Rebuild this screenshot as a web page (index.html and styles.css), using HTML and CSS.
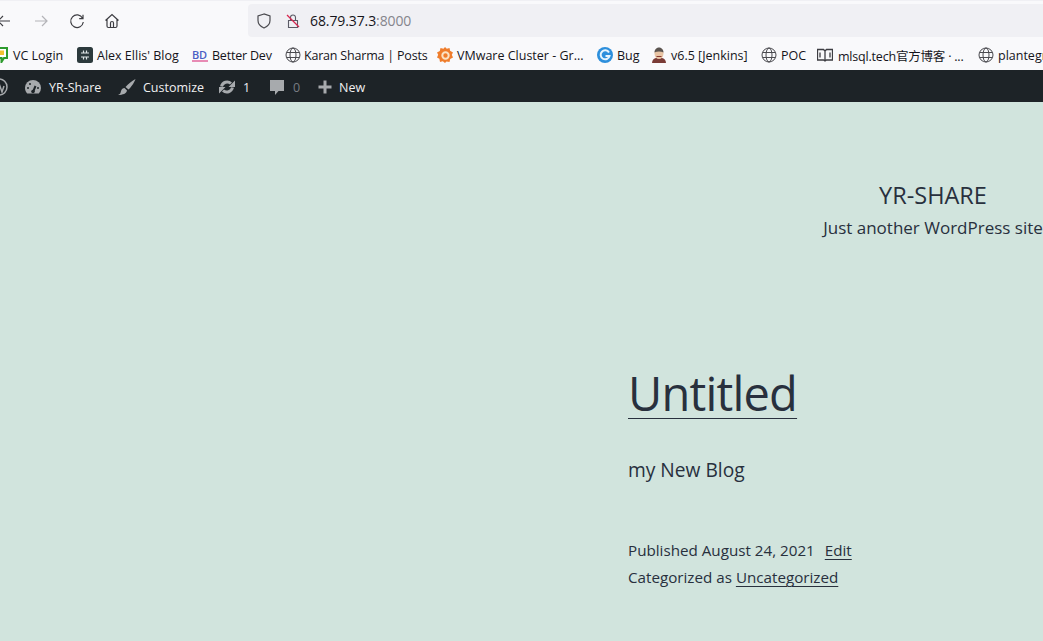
FILE: index.html
```html
<!DOCTYPE html>
<html lang="en">
<head>
	<meta charset="UTF-8">
	<title>YR-Share</title>
	<link rel="stylesheet" href="styles.css">
</head>
<body>
	<div class="toolbar">
		<div class="nav">
			<svg class="nav-icon back" viewBox="0 0 16 16"><path d="M14 8H2M7 3 2 8l5 5"/></svg>
			<svg class="nav-icon forward" viewBox="0 0 16 16"><path d="M2 8h12M9 3l5 5-5 5"/></svg>
			<svg class="nav-icon reload" viewBox="0 0 16 16"><path d="M13.6 5.2A6.3 6.3 0 1 0 14.3 9M14 1.8v3.8h-3.8"/></svg>
			<svg class="nav-icon home" viewBox="0 0 16 16"><path d="M1.500 7.500 8 1.500l6.500 6M3 6.500V13a1.500 1.500 0 0 0 1.500 1.500h7A1.500 1.500 0 0 0 13 13V6.500M6.500 14.500V10a1.500 1.500 0 0 1 3 0v4.500"/></svg>
		</div>
		<div class="urlbar">
			<svg class="shield" viewBox="0 0 16 16"><path d="M8 1 2 3v4.500c0 3.500 2.500 6 6 7.500 3.500-1.500 6-4 6-7.500V3z"/></svg>
			<svg class="lock" viewBox="0 0 16 16"><path class="lock-body" d="M3.500 7.500h9v7h-9zM5.500 7.500V4.500a2.500 2.500 0 0 1 5 0v3"/><path class="lock-slash" d="M2 2l12 12"/></svg>
			<span class="host">68.79.37.3</span><span class="port">:8000</span>
		</div>
	</div>

	<div class="bookmarks">
		<a class="mark mark-vc"><svg class="fav" viewBox="0 0 9 16"><path d="M-8 1H7v10H4l-2.500 4v-4H-8z" fill="#fff" stroke="#2e9b2e" stroke-width="2"/><rect y="3.500" width="4" height="4.500" fill="#f2c230"/></svg>VC Login</a>
		<a class="mark mark-alex"><svg class="fav" viewBox="0 0 16 16"><rect width="16" height="16" rx="2.500" fill="#2c3a3c"/><path d="M4 6h8M4 10h8M6.500 3.500v2M9.500 3.500v2M6.500 10.500v2M9.500 10.500v2" stroke="#dfe6e6" stroke-width="1.200"/></svg>Alex Ellis' Blog</a>
		<a class="mark mark-bd"><span class="bd">BD</span>Better Dev</a>
		<a class="mark mark-karan"><svg class="fav globe" viewBox="0 0 16 16"><circle cx="8" cy="8" r="7"/><ellipse cx="8" cy="8" rx="3" ry="7"/><path d="M1.500 5.500h13M1.500 10.500h13"/></svg>Karan Sharma | Posts</a>
		<a class="mark mark-grafana"><svg class="fav" viewBox="0 0 16 16"><path d="M8 0l1.800 1.800L12.500 1l.6 2.700L16 5.500l-1.200 2.300L16 10.500l-2.800 1.400L12.500 15l-3-.6L8 16l-2.200-1.700L3 15l-.6-3.200L0 10.500l1.200-2.700L0 5.500l2.800-1.500L3.500 1l3 .8z" fill="#ef7d2c"/><circle cx="8.500" cy="8.500" r="3.200" fill="none" stroke="#fbe3c4" stroke-width="2"/></svg>VMware Cluster - Gr...</a>
		<a class="mark mark-bug"><svg class="fav" viewBox="0 0 16 16"><circle cx="8" cy="8" r="8" fill="#2d8fdc"/><path d="M12 5.500A4.500 4.500 0 1 0 12.500 9H8.500" fill="none" stroke="#e8f5fd" stroke-width="2"/></svg>Bug</a>
		<a class="mark mark-jenkins"><svg class="fav" viewBox="0 0 16 16"><path d="M1 16c0-3 2-4.500 4-5h6c2 .5 4 2 4 5z" fill="#7a3b36"/><ellipse cx="8" cy="6.500" rx="4.500" ry="5.500" fill="#e8c4a4"/><path d="M3.500 5.500C3.500 2 6 .5 8 .5s4.500 1.500 4.500 5C10 4 6 4 3.500 5.500z" fill="#5b5450"/><path d="M5.500 9.500h5" stroke="#8a3b32"/></svg>v6.5 [Jenkins]</a>
		<a class="mark mark-poc"><svg class="fav globe" viewBox="0 0 16 16"><circle cx="8" cy="8" r="7"/><ellipse cx="8" cy="8" rx="3" ry="7"/><path d="M1.500 5.500h13M1.500 10.500h13"/></svg>POC</a>
		<a class="mark mark-mlsql"><svg class="fav book" viewBox="0 0 16 16"><path d="M.5 2.500h6L8 4l1.500-1.500h6v10.500h-6L8 14l-1.500-1H.5zM8 4v10M3 5.500v5M13 5.500v5"/></svg>mlsql.tech官方博客 · ...</a>
		<a class="mark mark-plant"><svg class="fav globe" viewBox="0 0 16 16"><circle cx="8" cy="8" r="7"/><ellipse cx="8" cy="8" rx="3" ry="7"/><path d="M1.500 5.500h13M1.500 10.500h13"/></svg>plantegr</a>
	</div>

	<div class="adminbar">
		<svg class="wp-logo" viewBox="0 0 18 18"><circle cx="9" cy="9" r="8" fill="none" stroke="#a7aaad" stroke-width="1.500"/><path d="M5 5.500 8 14l1.500-4L8 5.500M9 5.500 12 14l2-6" fill="none" stroke="#a7aaad" stroke-width="1.500"/></svg>
		<a class="bar-item item-site"><svg class="bar-icon" viewBox="0 0 18 18"><path d="M9 2a8 8 0 0 0-8 8c0 2.200.8 4 2.200 5.500h11.600A8 8 0 0 0 17 10a8 8 0 0 0-8-8z"/><path d="M9 14l2.500-6" stroke="#1d2327" stroke-width="2"/><circle cx="9" cy="13.500" r="1.800" fill="#1d2327"/><circle cx="4" cy="10" r="1" fill="#1d2327"/><circle cx="6" cy="6" r="1" fill="#1d2327"/><circle cx="14" cy="10" r="1" fill="#1d2327"/></svg>YR-Share</a>
		<a class="bar-item item-custom"><svg class="bar-icon" viewBox="0 0 18 18"><path d="M17.500 1c-1 3-4 8-7 10.500L7.500 9C10 6 14.500 2.500 17.500 1zM6.500 10l2.500 2.500c-.5 3-4 4.500-9 4.500 2.500-1 2.500-2 3-4 .5-2 2-3 3.500-3z"/></svg>Customize</a>
		<a class="bar-item item-updates"><svg class="bar-icon" viewBox="0 0 18 18"><path d="M3.500 8.500A5.800 5.800 0 0 1 13 5.500M14.500 9.500A5.800 5.800 0 0 1 5 12.500" fill="none" stroke="#a7aaad" stroke-width="3"/><path d="M17 2.500V9h-6.500zM1 15.500V9h6.500z"/></svg>1</a>
		<a class="bar-item item-comments dim"><svg class="bar-icon" viewBox="0 0 18 18"><path d="M2 2h14v11h-5.500L7 17v-4H2z"/></svg>0</a>
		<a class="bar-item item-new"><svg class="bar-icon" viewBox="0 0 18 18"><path d="M7.500 2.500h3v5h5v3h-5v5h-3v-5h-5v-3h5z"/></svg>New</a>
	</div>

	<div class="page">
		<header class="branding">
			<p class="site-title">YR-SHARE</p>
			<p class="site-desc">Just another WordPress site</p>
		</header>
		<main class="post">
			<h1 class="post-title"><a>Untitled</a></h1>
			<p class="post-text">my New Blog</p>
			<footer class="post-meta">
				<p>Published August 24, 2021<a class="edit">Edit</a></p>
				<p>Categorized as <a>Uncategorized</a></p>
			</footer>
		</main>
	</div>
</body>
</html>
```

FILE: styles.css
```css
*{margin:0;padding:0;box-sizing:border-box;}
html,body{width:1043px;height:641px;overflow:hidden;}
body{background:#d1e4dd;font-family:"Open Sans","Noto Sans CJK SC",sans-serif;color:#28303d;}

/* browser top */
.toolbar{height:40px;background:#f9f9fb;display:flex;align-items:center;border-top:1px solid #f0f0f4;}
.nav{width:248px;display:flex;align-items:center;flex:none;}
.nav-icon{width:16px;height:16px;fill:none;stroke:#3d3d42;stroke-width:1.200;flex:none;}
.back{margin-left:-4px;}
.forward{margin-left:21px;stroke:#b4b4b8;}
.reload{margin-left:20px;}
.home{margin-left:19px;}
.urlbar{flex:1;height:33px;background:#f0f0f4;display:flex;align-items:center;font-size:14px;padding-left:8px;border-radius:4px 0 0 4px;}
.shield{width:16px;height:16px;fill:none;stroke:#4a4a4f;stroke-width:1.200;margin-right:13px;}
.lock{width:16px;height:16px;fill:none;margin-right:9px;}
.lock-body{stroke:#5b5b66;stroke-width:1.100;}
.lock-slash{stroke:#d7264f;stroke-width:1.300;}
.host{color:#15141a;letter-spacing:-.1px;}
.port{color:#85858c;letter-spacing:-.1px;}

.bookmarks{height:30px;background:#f9f9fb;display:flex;align-items:center;font-size:12.500px;color:#15141a;white-space:nowrap;overflow:hidden;}
.mark{display:flex;align-items:center;gap:4px;flex:none;}
.fav{width:16px;height:16px;flex:none;overflow:hidden;}
.globe{fill:none;stroke:#4a4a4f;stroke-width:1;}
.book{fill:none;stroke:#3d3d42;stroke-width:1.300;}
.bd{color:#4b5fc4;font-size:11px;font-weight:600;width:16px;border-bottom:2px solid #e88bb4;line-height:11px;}
.mark-vc{width:77px;}
.mark-vc .fav{width:9px;}
.mark-alex{width:115px;}
.mark-bd{width:93px;letter-spacing:-.2px;}
.mark-karan{width:152px;gap:3px;letter-spacing:-.2px;}
.mark-grafana{width:160px;}
.mark-bug{width:54px;}
.mark-jenkins{width:110px;}
.mark-poc{width:56px;}
.mark-mlsql{width:161px;gap:5px;letter-spacing:-.2px;}

/* wp admin bar */
.adminbar{height:32px;background:#1d2327;display:flex;align-items:center;padding-top:2px;font-size:12.500px;color:#f0f0f1;white-space:nowrap;}
.wp-logo{width:18px;height:18px;margin-left:-10px;margin-right:16px;flex:none;}
.bar-item{display:flex;align-items:center;flex:none;}
.bar-icon{width:18px;height:18px;fill:#a7aaad;flex:none;margin-right:7px;}
.item-site{width:94px;}
.item-custom{width:100px;}
.item-updates{width:50px;}
.item-comments{width:48px;}
.item-new .bar-icon{margin-right:5px;}
.dim{color:#787c82;}

/* page */
.page{display:flex;flex-direction:column;}
.branding{width:220px;margin-left:823px;padding-top:79px;text-align:center;}
.site-title{font-size:23.500px;line-height:29px;}
.site-desc{font-size:17px;line-height:26px;margin-top:5px;white-space:nowrap;}
.post{margin-left:628px;padding-top:123px;}
.post-title{font-size:47px;font-weight:400;line-height:58px;letter-spacing:-.8px;}
.post-title a{text-decoration:underline;text-decoration-thickness:1px;text-underline-offset:7px;}
.post-text{font-size:19.200px;line-height:28px;margin-top:34px;}
.post-meta{font-size:15.200px;line-height:27px;margin-top:53px;}
.post-meta a{text-decoration:underline;text-decoration-thickness:1px;text-underline-offset:3px;}
.edit{margin-left:10px;}
```
